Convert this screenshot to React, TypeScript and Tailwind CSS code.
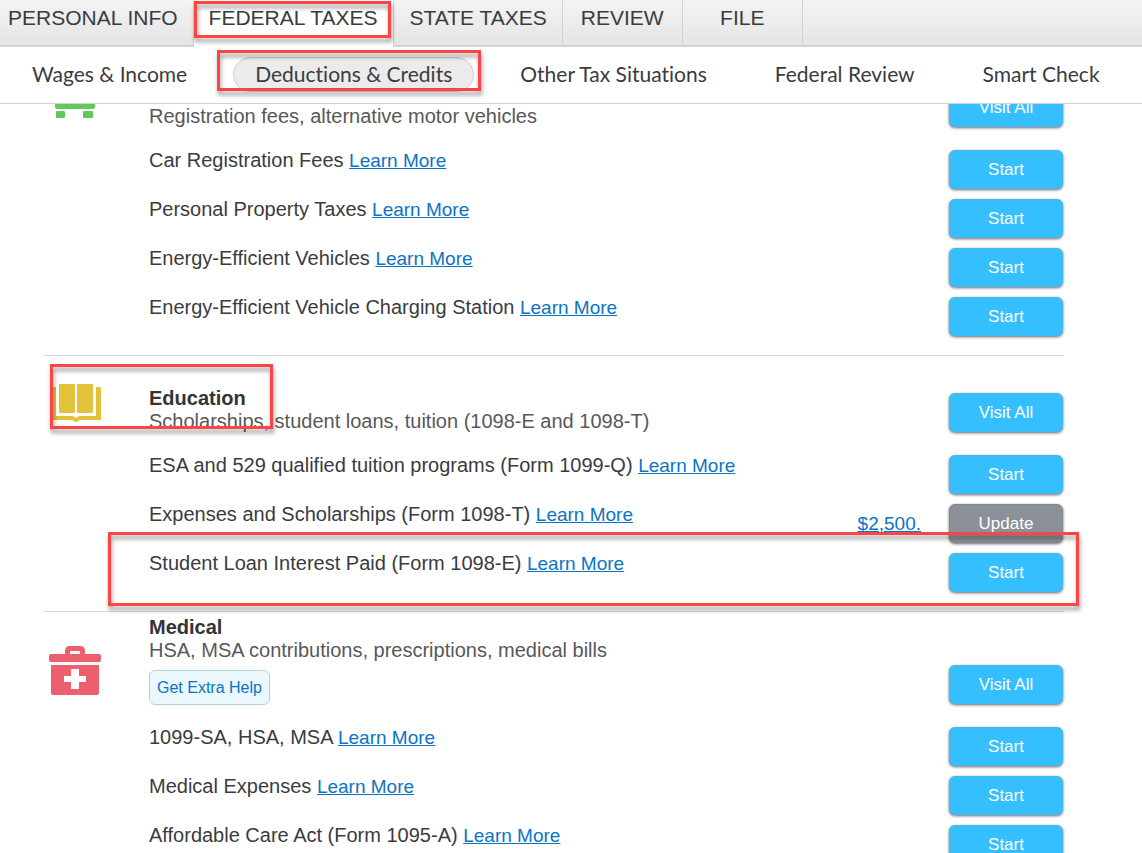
import React from 'react';

type Item = {
  label: string;
  amount?: string;
  highlighted?: boolean;
};

type Section = {
  title?: string;
  summary: string;
  icon: React.ReactNode;
  spacing: string;
  items: Item[];
  extraHelp?: boolean;
  highlighted?: boolean;
};

const tabs = ['PERSONAL INFO', 'FEDERAL TAXES', 'STATE TAXES', 'REVIEW', 'FILE'];

const subTabs = ['Wages & Income', 'Deductions & Credits', 'Other Tax Situations', 'Federal Review', 'Smart Check'];

const CarIcon = () => (
  <svg className="w-[52px] h-[44px]" viewBox="0 0 52 44" fill="#63c75b" aria-hidden="true">
    <path d="M12 3h28l5 15q1 1 1 3v12q0 2-2 2H8q-2 0-2-2V21q0-2 1-3zM15 7l-3 10h28L37 7z" fillRule="evenodd" />
    <rect x="7" y="37" width="9" height="7" rx="1" />
    <rect x="34" y="37" width="10" height="7" rx="1" />
  </svg>
);

const BookIcon = () => (
  <svg className="w-[52px] h-[39px]" viewBox="0 0 52 39" fill="#e1c238" aria-hidden="true">
    <rect x="10" y="0" width="16" height="29" rx="1" />
    <rect x="28" y="0" width="16" height="29" rx="1" />
    <path d="M4 3h3v29h16q2 0 4 2 2-2 4-2h16V3h3q2 0 2 1v32H30q-1 2-3 2t-3-2H2V4q0-1 2-1z" />
  </svg>
);

const MedicalIcon = () => (
  <svg className="w-[52px] h-[49px]" viewBox="0 0 52 49" fill="#ec5f6f" aria-hidden="true">
    <path d="M2 8h14V5q0-5 5-5h10q5 0 5 5v3h14q2 0 2 2v4q0 2-2 2H2q-2 0-2-2v-4q0-2 2-2zM21 8h10V6q0-1-1-1h-8q-1 0-1 1z" fillRule="evenodd" />
    <path d="M2 19h48v28q0 2-2 2H4q-2 0-2-2zM22 23v7h-7v6h7v7h8v-7h7v-6h-7v-7z" fillRule="evenodd" />
  </svg>
);

const sections: Section[] = [
  {
    summary: 'Registration fees, alternative motor vehicles',
    icon: <CarIcon />,
    spacing: '-mt-[30px]',
    items: [
      { label: 'Car Registration Fees' },
      { label: 'Personal Property Taxes' },
      { label: 'Energy-Efficient Vehicles' },
      { label: 'Energy-Efficient Vehicle Charging Station' },
    ],
  },
  {
    title: 'Education',
    summary: 'Scholarships, student loans, tuition (1098-E and 1098-T)',
    icon: <BookIcon />,
    spacing: 'border-t border-[#d9d9d9] pt-7',
    highlighted: true,
    items: [
      { label: 'ESA and 529 qualified tuition programs (Form 1099-Q)' },
      { label: 'Expenses and Scholarships (Form 1098-T)', amount: '$2,500.' },
      { label: 'Student Loan Interest Paid (Form 1098-E)', highlighted: true },
    ],
  },
  {
    title: 'Medical',
    summary: 'HSA, MSA contributions, prescriptions, medical bills',
    icon: <MedicalIcon />,
    spacing: 'border-t border-[#d9d9d9] pt-1',
    extraHelp: true,
    items: [
      { label: '1099-SA, HSA, MSA' },
      { label: 'Medical Expenses' },
      { label: 'Affordable Care Act (Form 1095-A)' },
    ],
  },
];

const Highlight = ({ className }: { className: string }) => (
  <span
    className={`absolute z-10 border-3 border-[#ff4444] pointer-events-none drop-shadow-[1px_4px_2px_rgba(0,0,0,0.4)] ${className}`}
  />
);

const ActionButton = ({ children, muted }: { children: React.ReactNode; muted?: boolean }) => (
  <button
    type="button"
    className={`w-[114px] h-[39px] shrink-0 rounded-md border text-[17px] text-white shadow-[0_1px_3px_rgba(0,0,0,0.6)] ${
      muted ? 'bg-[#8c9098] border-[#85888e]' : 'bg-[#35bfff] border-[#45b8ec]'
    }`}
  >
    {children}
  </button>
);

const ItemRow = ({ item }: { item: Item }) => (
  <li className="relative flex items-start h-[49px]">
    <p className="flex-1">
      {item.label}{' '}
      <a href="#" className="text-[19px] text-[#0b74c4] underline">
        Learn More
      </a>
    </p>
    <div className="flex items-center gap-7 pt-px">
      {item.amount && (
        <a href="#" className="text-[19px] text-[#0b74c4] underline">
          {item.amount}
        </a>
      )}
      <ActionButton muted={!!item.amount}>{item.amount ? 'Update' : 'Start'}</ActionButton>
    </div>
    {item.highlighted && <Highlight className="-top-5 -bottom-[5px] -left-[41px] -right-4" />}
  </li>
);

const TaxSection = ({ section }: { section: Section }) => (
  <section className={`pb-[10px] pr-px ${section.spacing}`}>
    <div className="relative flex items-end">
      <div className="w-[106px] shrink-0 pl-[6px] pb-[10px]">{section.icon}</div>
      <div className="flex-1">
        {section.title && <h2 className="font-bold text-[#333338]">{section.title}</h2>}
        <p className="text-[#58585a]">{section.summary}</p>
        {section.extraHelp && (
          <button
            type="button"
            className="block mt-2 h-[35px] px-[7px] rounded-md border border-[#b5d3de] bg-[#eaf7fd] text-base text-[#0b74c4]"
          >
            Get Extra Help
          </button>
        )}
      </div>
      <div className="pb-px">
        <ActionButton>Visit All</ActionButton>
      </div>
      {section.highlighted && <Highlight className="-top-5 bottom-1 left-[7px] w-[223px]" />}
    </div>
    <ul className="mt-[21px] ml-[106px]">
      {section.items.map((item) => (
        <ItemRow key={item.label} item={item} />
      ))}
    </ul>
  </section>
);

export default function App() {
  return (
    <div className="flex flex-col h-screen overflow-hidden bg-white font-['Liberation_Sans',Arial,sans-serif] text-[20px] leading-[23px] text-[#3b3b3f]">
      <header className="shrink-0">
        <nav className="flex h-[47px] bg-linear-to-b from-[#f3f3f3] via-[#ececec] to-[#e4e4e4] text-[21px]">
          {tabs.map((tab, i) => (
            <a
              key={tab}
              href="#"
              className={`relative flex justify-center min-w-[120px] pt-[6px] border-r border-[#d3d3d3] ${
                i === 0 ? 'pl-2 pr-[15px]' : i === 1 ? 'pl-[15px] pr-4' : 'px-[15px]'
              } ${tab === 'FEDERAL TAXES' ? 'bg-white' : 'border-b-2'}`}
            >
              {tab}
              {tab === 'FEDERAL TAXES' && <Highlight className="top-px bottom-[9px] left-0 right-[2px]" />}
            </a>
          ))}
          <div className="flex-1 border-b-2 border-[#d3d3d3]" />
        </nav>
        <nav className="flex items-center gap-6 h-[57px] pb-[2px] pl-[10px] border-b border-[#d0d0d0] font-[Lato,sans-serif] text-[21px] whitespace-nowrap [font-variant-ligatures:none]">
          {subTabs.map((tab) => (
            <a
              key={tab}
              href="#"
              className={`relative flex items-center h-[35px] pb-[2px] px-[21px] rounded-full border ${
                tab === 'Deductions & Credits' ? 'bg-[#ebebeb] border-[#cfcfcf]' : 'border-transparent'
              }`}
            >
              {tab}
              {tab === 'Deductions & Credits' && <Highlight className="-top-2 bottom-0 -left-[17px] -right-2" />}
            </a>
          ))}
        </nav>
      </header>

      <main className="flex-1 min-h-0 overflow-hidden pl-[43px] pr-[78px]">
        {sections.map((section) => (
          <TaxSection key={section.summary} section={section} />
        ))}
      </main>
    </div>
  );
}
